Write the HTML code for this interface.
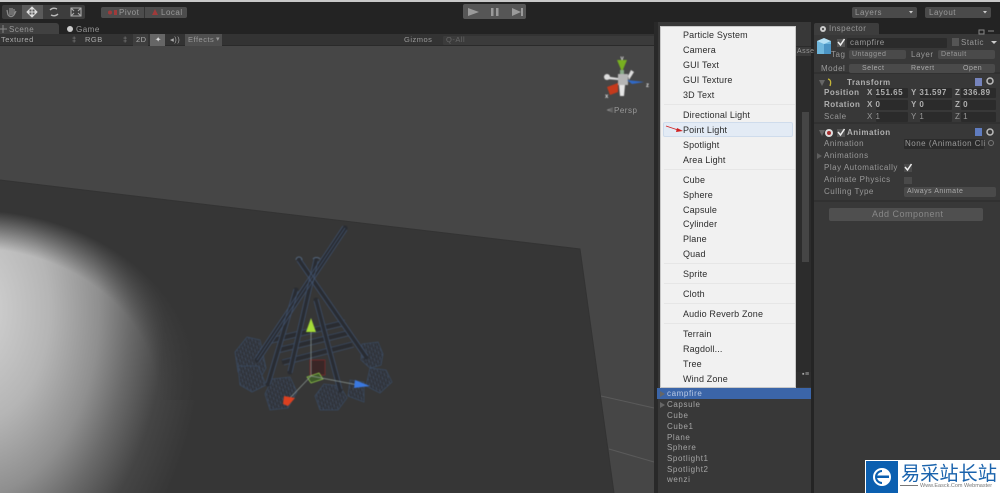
<!DOCTYPE html>
<html><head><meta charset="utf-8">
<style>
html,body{margin:0;padding:0;background:#222;width:1000px;height:493px;overflow:hidden}
#r{position:relative;width:1000px;height:493px;overflow:hidden;background:#232323;font-family:"Liberation Sans","Noto Sans CJK SC",sans-serif}
svg{position:absolute;left:0;top:0}
.t{position:absolute;white-space:nowrap;font-size:8px;line-height:10px;color:#aaa;letter-spacing:.5px;filter:blur(.3px)}
.b{position:absolute;background:#4a4a4a;border-radius:2px}
.f{position:absolute;background:#2b2b2b;border-radius:1px}
.m{position:absolute;left:683px;white-space:nowrap;font-size:9px;line-height:12px;color:#2c2c2c;letter-spacing:.15px;filter:blur(.2px)}
.h{position:absolute;left:667px;white-space:nowrap;font-size:8px;line-height:11px;color:#a5a5a5;letter-spacing:.6px;filter:blur(.3px)}
.s{position:absolute;left:664px;width:131px;height:1px;background:#e6e6e6}
</style></head><body>
<div id="r">
<!-- scene -->
<svg width="1000" height="493" viewBox="0 0 1000 493">
<defs>
<radialGradient id="gl" gradientUnits="userSpaceOnUse" cx="0" cy="0" r="1" gradientTransform="translate(-30 310) scale(235 340)">
<stop offset="0" stop-color="#d2d2d2"/><stop offset=".13" stop-color="#cacaca"/><stop offset=".34" stop-color="#b5b5b5"/><stop offset=".55" stop-color="#8f8f8f"/><stop offset=".68" stop-color="#6a6a6a"/><stop offset=".83" stop-color="#454545"/><stop offset="1" stop-color="#363636"/>
</radialGradient>
<radialGradient id="top" gradientUnits="userSpaceOnUse" cx="0" cy="0" r="1" gradientTransform="translate(-30 400) scale(235 190)">
<stop offset=".8" stop-color="#363636" stop-opacity="0"/><stop offset=".9" stop-color="#363636" stop-opacity=".5"/><stop offset="1" stop-color="#363636" stop-opacity="1"/>
</radialGradient>
<clipPath id="pc"><polygon points="0,180 580,249 614,493 0,493"/></clipPath>
<pattern id="w" width="4" height="4" patternUnits="userSpaceOnUse" patternTransform="rotate(30)"><rect width="4" height="4" fill="#2e3035"/><path d="M0 0H4M0 0V4M0 0L4 4" stroke="#46566e" stroke-width=".5" fill="none"/></pattern>
</defs>
<rect x="0" y="46" width="658" height="447" fill="#464646"/>
<polygon points="0,180 580,249 614,493 0,493" fill="#363636"/>
<g clip-path="url(#pc)">
<rect x="0" y="180" width="210" height="313" fill="url(#gl)"/>
<rect x="0" y="180" width="210" height="220" fill="url(#top)"/>
</g>
<path d="M0 180L580 249L614 493" fill="none" stroke="#333" stroke-width="1"/>
<path d="M601 396L654 408M609 449L654 462" stroke="#5a5a5a" stroke-width="1" fill="none"/>

<!-- campfire -->
<g fill="none" style="filter:blur(.4px)">
<g stroke="#2a2c31" stroke-width="5">
<path d="M272 340L345 322M276 350L350 332M282 362L352 344"/>
</g>
<g stroke="#3d4d64" stroke-width=".7">
<path d="M270 338L345 320M272 343L347 325M276 348L350 330M278 353L352 335M282 360L352 342M284 365L354 347"/>
</g>
<g fill="url(#w)" stroke="#3a4a60" stroke-width=".8">
<path d="M247 337L260 340L266 368L257 384L238 372L235 352Z"/>
<path d="M238 366L258 366L266 385L252 392L240 385Z"/>
<path d="M362 344L378 342L383 354L381 365L370 368L361 360Z"/>
<path d="M370 368L386 370L392 382L380 393L366 386Z"/>
<path d="M272 379L290 377L297 392L288 408L270 410L265 394Z"/>
<path d="M324 384L340 386L347 398L338 410L320 410L315 396Z"/>
<path d="M350 380L364 382L364 402L348 396Z"/>
</g>
<g stroke="#292c32" stroke-width="5" stroke-linecap="round">
<path d="M257 360L345 228"/><path d="M299 260L366 357"/><path d="M316 260L290 372"/>
<path d="M296 290L268 384"/><path d="M316 300L340 390"/>
</g>
<g stroke="#3f506a" stroke-width=".8">
<path d="M255 358L343 226M259 362L347 230M257 360L345 228"/><path d="M297 261L364 358M301 259L368 356"/>
<path d="M314 259L288 371M318 261L292 373"/><path d="M294 289L266 383M298 291L270 385"/>
<path d="M314 301L338 391M318 299L342 389"/>
</g>
<path d="M296 260a3 3 0 0 1 6 0M313 259a4 3 0 0 1 7 0" stroke="#56697f"/>
<rect x="310" y="360" width="15" height="15" stroke="#6b2a2a" fill="#3a2626"/>
<polygon points="307,377 319,373 323,379 311,383" fill="#3e5a2a" stroke="#8ec04a" stroke-width=".8"/>
<path d="M311 330V376M311 376L358 385M311 376L290 398" stroke="#8f9b96" stroke-width=".7"/>
<polygon points="311,318 316,332 306,332" fill="#a6dc38"/>
<polygon points="355,380 370,386 354,388" fill="#3a78e0"/>
<polygon points="284,396 295,398 288,406 283,404" fill="#dc4020"/>
</g>

<!-- gizmo -->
<g style="filter:blur(.4px)">
<text x="622" y="60" font-size="6" font-weight="bold" fill="#ddd" text-anchor="middle" font-family="Liberation Sans">y</text>
<polygon points="617,60 627,60 622,72" fill="#78b020"/>
<rect x="620" y="70" width="4" height="6" fill="#8a8"/>
<rect x="618" y="74" width="10" height="11" fill="#b5b5b5"/>
<polygon points="604,76 618,78 618,80 606,79" fill="#ddd"/>
<circle cx="607" cy="77" r="3" fill="#ddd"/>
<polygon points="628,76 631,70 634,72 629,80" fill="#ddd"/>
<polygon points="619,85 625,85 624,96 620,96" fill="#e5e5e5"/>
<polygon points="627,80 644,82 632,84" fill="#2f69c8"/>
<polygon points="607,87 618,83 618,92 610,95" fill="#c53a1c"/>
<text x="646" y="87" font-size="6" font-weight="bold" fill="#ddd" font-family="Liberation Sans">z</text>
<text x="605" y="98" font-size="6" font-weight="bold" fill="#ddd" font-family="Liberation Sans">x</text>
<path d="M607 110L613 108M607 110L613 110M607 110L613 112" stroke="#999" stroke-width=".6"/>
</g>
</svg>
<div class="t" style="left:614px;top:106px;color:#999;font-size:8px">Persp</div>

<!-- top bar -->
<div style="position:absolute;left:0;top:0;width:1000px;height:2px;background:#c9c9c9"></div>
<div class="b" style="left:2px;top:5px;width:83px;height:14px;background:#3d3d3d"></div>
<div class="b" style="left:22px;top:5px;width:21px;height:14px;background:#5a5a5a;border-radius:0"></div>
<svg width="90" height="24" viewBox="0 0 90 24" style="left:0;top:0">
<path d="M8 15L7 10M10 15V8M12 15V8M14 15V9M14 15L16 11M8 15Q11 18 14 15" stroke="#8a8a8a" stroke-width="1.3" fill="none"/>
<path d="M32 8V16M28 12H36M32 7L30 9H34ZM32 17L30 15H34ZM27 12L29 10V14ZM37 12L35 10V14Z" stroke="#ddd" stroke-width="1" fill="#ddd"/>
<path d="M50 10Q53 7 57 9M58 14Q55 17 51 15" stroke="#bbb" stroke-width="1.4" fill="none"/>
<path d="M71 8H81V16H71Z M71 8L74 11M81 8L78 11M71 16L74 13M81 16L78 13" stroke="#aaa" stroke-width="1.1" fill="none"/>
</svg>
<div class="b" style="left:101px;top:7px;width:86px;height:11px;background:#4c4c4c"></div>
<div style="position:absolute;left:144px;top:7px;width:1px;height:11px;background:#333"></div>
<svg width="180" height="20" style="left:0;top:0"><circle cx="110" cy="12.500" r="2" fill="#a03a3a"/><path d="M114 10h3v5h-3z" fill="#a03a3a"/><path d="M152 15L155 9L158 15Z" fill="#a03a3a"/></svg>
<div class="t" style="left:119px;top:8px;color:#999">Pivot</div>
<div class="t" style="left:161px;top:8px;color:#999">Local</div>

<div class="b" style="left:463px;top:4px;width:63px;height:15px;background:#565656"></div>
<svg width="540" height="24" style="left:0;top:0">
<polygon points="468,8 479,12 468,16" fill="#9a9a9a"/>
<rect x="491" y="8" width="2.500" height="8" fill="#9a9a9a"/><rect x="496" y="8" width="2.500" height="8" fill="#9a9a9a"/>
<polygon points="512,8 521,12 512,16" fill="#9a9a9a"/><rect x="521" y="8" width="2" height="8" fill="#9a9a9a"/>
</svg>

<div class="b" style="left:852px;top:7px;width:65px;height:11px"></div>
<div class="t" style="left:855px;top:8px;color:#999">Layers</div>
<div class="b" style="left:925px;top:7px;width:66px;height:11px"></div>
<div class="t" style="left:929px;top:8px;color:#999">Layout</div>
<svg width="1000" height="20" style="left:0;top:0"><path d="M909 11h4l-2 2.500zM983 11h4l-2 2.500z" fill="#ccc"/></svg>

<!-- scene tabs & toolbar -->
<div style="position:absolute;left:0;top:23px;width:59px;height:11px;background:#414141;border-radius:0 3px 0 0"></div>
<div class="t" style="left:9px;top:25px;color:#999">Scene</div>
<div class="t" style="left:76px;top:25px;color:#999">Game</div>
<svg width="90" height="36" style="left:0;top:0"><path d="M0 29H7M3 25V33" stroke="#888" fill="none"/><circle cx="70" cy="29" r="3" fill="#ccc"/></svg>
<div style="position:absolute;left:0;top:34px;width:658px;height:12px;background:#333"></div>
<div style="position:absolute;left:0;top:45px;width:658px;height:1px;background:#2a2a2a"></div>
<div class="t" style="left:1px;top:35px;font-size:7.500px;color:#aaa">Textured</div>
<div class="t" style="left:85px;top:35px;font-size:7.500px;color:#aaa">RGB</div>
<div class="t" style="left:72px;top:35px;font-size:7.500px;color:#888">‡</div>
<div class="t" style="left:123px;top:35px;font-size:7.500px;color:#888">‡</div>
<div class="b" style="left:133px;top:34px;width:15px;height:12px;background:#3e3e3e;border-radius:0"></div>
<div class="t" style="left:136px;top:35px;font-size:7.500px;color:#aaa">2D</div>
<div class="b" style="left:150px;top:34px;width:15px;height:12px;background:#666;border-radius:0"></div>
<div class="t" style="left:155px;top:35px;font-size:7.500px;color:#ddd">✦</div>
<div class="t" style="left:170px;top:35px;font-size:7.500px;color:#aaa">◂))</div>
<div class="b" style="left:185px;top:34px;width:37px;height:12px;background:#4f4f4f;border-radius:0"></div>
<div class="t" style="left:188px;top:35px;font-size:7.500px;color:#999">Effects</div>
<div class="t" style="left:216px;top:35px;font-size:7px;color:#999">▾</div>
<div class="t" style="left:404px;top:35px;font-size:7.500px;color:#999">Gizmos</div>
<div class="f" style="left:443px;top:36px;width:215px;height:9px;background:#3b3b3b"></div>
<div class="t" style="left:446px;top:35px;font-size:7.500px;color:#666">Q‑All</div>

<!-- panel divider + hierarchy -->
<div style="position:absolute;left:654px;top:22px;width:4px;height:471px;background:#292929"></div>
<div style="position:absolute;left:658px;top:22px;width:153px;height:471px;background:#383838"></div>
<div style="position:absolute;left:795px;top:46px;width:16px;height:340px;background:#2c2c2c"></div>
<div style="position:absolute;left:802px;top:112px;width:7px;height:150px;background:#454545"></div>
<div style="position:absolute;left:811px;top:22px;width:3px;height:471px;background:#242424"></div>
<div style="position:absolute;left:795px;top:47px;width:16px;height:9px;background:#3a3a3a"></div>
<div class="t" style="left:797px;top:47px;font-size:7px;color:#999">Asse</div>
<div style="position:absolute;left:795px;top:372px;width:16px;height:15px;background:#2f2f2f"></div>
<div class="t" style="left:802px;top:370px;font-size:7px;color:#aaa">▪≡</div>

<div style="position:absolute;left:657px;top:388px;width:154px;height:11px;background:#3b65a8"></div>
<div class="h" style="top:388px;color:#b9c9e4">campfire</div>
<div class="h" style="top:399px">Capsule</div>
<div class="h" style="top:410px">Cube</div>
<div class="h" style="top:421px">Cube1</div>
<div class="h" style="top:432px">Plane</div>
<div class="h" style="top:442px">Sphere</div>
<div class="h" style="top:453px">Spotlight1</div>
<div class="h" style="top:464px">Spotlight2</div>
<div class="h" style="top:474px">wenzi</div>
<svg width="670" height="420" style="left:0;top:0"><path d="M660 391l5 3-5 3zM660 402l5 3-5 3z" fill="#666"/></svg>

<!-- menu -->
<div style="position:absolute;left:660px;top:26px;width:136px;height:362px;background:#f1f1f1;border:1px solid #c8c8c8;box-sizing:border-box"></div>
<div class="m" style="top:29px">Particle System</div>
<div class="m" style="top:44px">Camera</div>
<div class="m" style="top:59px">GUI Text</div>
<div class="m" style="top:74px">GUI Texture</div>
<div class="m" style="top:89px">3D Text</div>
<div class="s" style="top:104px"></div>
<div style="position:absolute;left:663px;top:122px;width:130px;height:15px;background:#e3ebf5;border:1px solid #cfdcec;box-sizing:border-box;border-radius:2px"></div>
<div class="m" style="top:109px">Directional Light</div>
<div class="m" style="top:124px">Point Light</div>
<div class="m" style="top:139px">Spotlight</div>
<div class="m" style="top:154px">Area Light</div>
<div class="s" style="top:169px"></div>
<div class="m" style="top:174px">Cube</div>
<div class="m" style="top:189px">Sphere</div>
<div class="m" style="top:204px">Capsule</div>
<div class="m" style="top:218px">Cylinder</div>
<div class="m" style="top:233px">Plane</div>
<div class="m" style="top:248px">Quad</div>
<div class="s" style="top:263px"></div>
<div class="m" style="top:268px">Sprite</div>
<div class="s" style="top:283px"></div>
<div class="m" style="top:288px">Cloth</div>
<div class="s" style="top:303px"></div>
<div class="m" style="top:308px">Audio Reverb Zone</div>
<div class="s" style="top:323px"></div>
<div class="m" style="top:328px">Terrain</div>
<div class="m" style="top:343px">Ragdoll...</div>
<div class="m" style="top:358px">Tree</div>
<div class="m" style="top:373px">Wind Zone</div>
<svg width="700" height="140" style="left:0;top:0"><path d="M666 126L678 130" stroke="#d02020" stroke-width=".8"/><polygon points="677,128 683,131 676,132" fill="#d02020"/></svg>

<!-- inspector -->
<div style="position:absolute;left:814px;top:34px;width:186px;height:459px;background:#383838"></div>
<div style="position:absolute;left:814px;top:23px;width:65px;height:12px;background:#3d3d3d;border-radius:2px 2px 0 0"></div>
<svg width="1000" height="240" style="left:0;top:0">
<circle cx="823" cy="29" r="3" fill="#ccc"/><circle cx="823" cy="29" r="1" fill="#333"/>
<rect x="817" y="41" width="14" height="13" fill="#6fb7dd"/><polygon points="817,41 824,38 831,41 824,44" fill="#b5e0f4"/><rect x="824" y="44" width="7" height="10" fill="#4b94c4"/>
<rect x="837" y="39" width="8" height="8" fill="#555"/><path d="M838 42l2.500 3 4-6" stroke="#eee" stroke-width="1.500" fill="none"/>
<rect x="952" y="38" width="7" height="8" fill="#555"/>
<path d="M991 41h6l-3 3z" fill="#ccc"/>
<path d="M819 80h6l-3 6zM819 130h6l-3 6z" fill="#666"/>
<path d="M828 79q4 1 2 7" stroke="#c4b43a" stroke-width="1.300" fill="none"/>
<circle cx="829" cy="133" r="4" fill="#ddd"/><circle cx="829" cy="133" r="2" fill="#a83030"/>
<rect x="837" y="129" width="8" height="8" fill="#555"/><path d="M838 132l2.500 3 4-6" stroke="#eee" stroke-width="1.500" fill="none"/>
<rect x="975" y="78" width="7" height="8" fill="#7684bd"/><rect x="975" y="128" width="7" height="8" fill="#5f7cc0"/>
<circle cx="990" cy="81" r="3" fill="none" stroke="#bbb" stroke-width="1.500"/><circle cx="990" cy="132" r="3" fill="none" stroke="#bbb" stroke-width="1.500"/>
<path d="M979 30h5v4h-5zM988 31h6" stroke="#888" fill="none"/>
<path d="M814 73H1000M814 123H1000M814 201H1000" stroke="#2a2a2a"/>
</svg>
<div class="t" style="left:829px;top:24px;color:#999">Inspector</div>
<div class="f" style="left:847px;top:38px;width:100px;height:10px"></div>
<div class="t" style="left:850px;top:38px;color:#999">campfire</div>
<div class="t" style="left:961px;top:38px;color:#999">Static</div>
<div class="t" style="left:831px;top:50px;color:#999">Tag</div>
<div class="b" style="left:849px;top:50px;width:57px;height:9px"></div>
<div class="t" style="left:852px;top:50px;font-size:7px;color:#999">Untagged</div>
<div class="t" style="left:911px;top:50px;color:#999">Layer</div>
<div class="b" style="left:938px;top:50px;width:57px;height:9px"></div>
<div class="t" style="left:941px;top:50px;font-size:7px;color:#999">Default</div>
<div class="t" style="left:821px;top:64px;color:#999">Model</div>
<div class="b" style="left:849px;top:64px;width:146px;height:9px"></div>
<div class="t" style="left:862px;top:64px;font-size:7px;color:#aaa">Select</div>
<div class="t" style="left:911px;top:64px;font-size:7px;color:#aaa">Revert</div>
<div class="t" style="left:963px;top:64px;font-size:7px;color:#aaa">Open</div>
<div class="t" style="left:847px;top:78px;font-weight:bold;color:#b0b0b0">Transform</div>
<div class="t" style="left:824px;top:88px;font-weight:bold;color:#b0b0b0">Position</div>
<div class="t" style="left:824px;top:100px;font-weight:bold;color:#b0b0b0">Rotation</div>
<div class="t" style="left:824px;top:112px;color:#999">Scale</div>
<div class="f" style="left:876px;top:88px;width:32px;height:10px"></div><div class="f" style="left:920px;top:88px;width:32px;height:10px"></div><div class="f" style="left:961px;top:88px;width:35px;height:10px"></div>
<div class="f" style="left:876px;top:100px;width:32px;height:10px"></div><div class="f" style="left:920px;top:100px;width:32px;height:10px"></div><div class="f" style="left:961px;top:100px;width:35px;height:10px"></div>
<div class="f" style="left:876px;top:112px;width:32px;height:10px"></div><div class="f" style="left:920px;top:112px;width:32px;height:10px"></div><div class="f" style="left:961px;top:112px;width:35px;height:10px"></div>
<div class="t" style="left:867px;top:88px;font-weight:bold;color:#b0b0b0">X 151.65</div>
<div class="t" style="left:911px;top:88px;font-weight:bold;color:#b0b0b0">Y 31.597</div>
<div class="t" style="left:955px;top:88px;font-weight:bold;color:#b0b0b0">Z 336.89</div>
<div class="t" style="left:867px;top:100px;font-weight:bold;color:#b0b0b0">X 0</div>
<div class="t" style="left:911px;top:100px;font-weight:bold;color:#b0b0b0">Y 0</div>
<div class="t" style="left:955px;top:100px;font-weight:bold;color:#b0b0b0">Z 0</div>
<div class="t" style="left:867px;top:112px;color:#999">X 1</div>
<div class="t" style="left:911px;top:112px;color:#999">Y 1</div>
<div class="t" style="left:955px;top:112px;color:#999">Z 1</div>
<div class="t" style="left:847px;top:128px;font-weight:bold;color:#b0b0b0">Animation</div>
<div class="t" style="left:824px;top:139px;color:#999">Animation</div>
<div class="f" style="left:904px;top:139px;width:80px;height:10px"></div>
<div class="t" style="left:905px;top:139px;color:#999">None (Animation Cli</div>
<div class="t" style="left:824px;top:151px;color:#999">Animations</div>
<div class="t" style="left:824px;top:163px;color:#999">Play Automatically</div>
<div class="t" style="left:824px;top:175px;color:#999">Animate Physics</div>
<div class="t" style="left:824px;top:187px;color:#999">Culling Type</div>
<div class="b" style="left:904px;top:187px;width:92px;height:10px"></div>
<div class="t" style="left:907px;top:187px;font-size:7px;color:#aaa">Always Animate</div>
<svg width="1000" height="230" style="left:0;top:0">
<rect x="904" y="164" width="8" height="8" fill="#4a4a4a"/><path d="M905 167l2.500 3 4-6" stroke="#eee" stroke-width="1.500" fill="none"/>
<rect x="904" y="177" width="8" height="7" fill="#4a4a4a"/>
<path d="M817 153l5 3-5 3z" fill="#5e5e5e"/>
<circle cx="991" cy="143" r="2.500" fill="none" stroke="#777"/>
</svg>
<div class="b" style="left:829px;top:208px;width:154px;height:13px;background:#4f4f4f"></div>
<div class="t" style="left:872px;top:209px;font-size:9px;color:#888">Add Component</div>

<!-- watermark -->
<div style="position:absolute;left:865px;top:460px;width:135px;height:33px;background:#fff"></div>
<div style="position:absolute;left:866px;top:461px;width:32px;height:32px;background:#0b5fb0"></div>
<svg width="1000" height="493" style="left:0;top:0">
<circle cx="882" cy="477" r="9" fill="#fff"/><rect x="876" y="475.500" width="13" height="2.500" fill="#0b5fb0"/>
<path d="M882 471a6 6 0 0 0 0 12" fill="none" stroke="#0b5fb0" stroke-width="2"/>
</svg>
<div style="position:absolute;left:901px;top:461px;font-size:19.200px;line-height:22px;color:#1a63ad;white-space:nowrap;font-family:'Noto Sans CJK SC',sans-serif">易采站长站</div>
<div style="position:absolute;left:900px;top:485px;width:18px;height:1px;background:#777"></div>
<div style="position:absolute;left:920px;top:483px;font-size:5.500px;line-height:7px;color:#777;white-space:nowrap">Www.Easck.Com Webmaster</div>
</div>
</body></html>
